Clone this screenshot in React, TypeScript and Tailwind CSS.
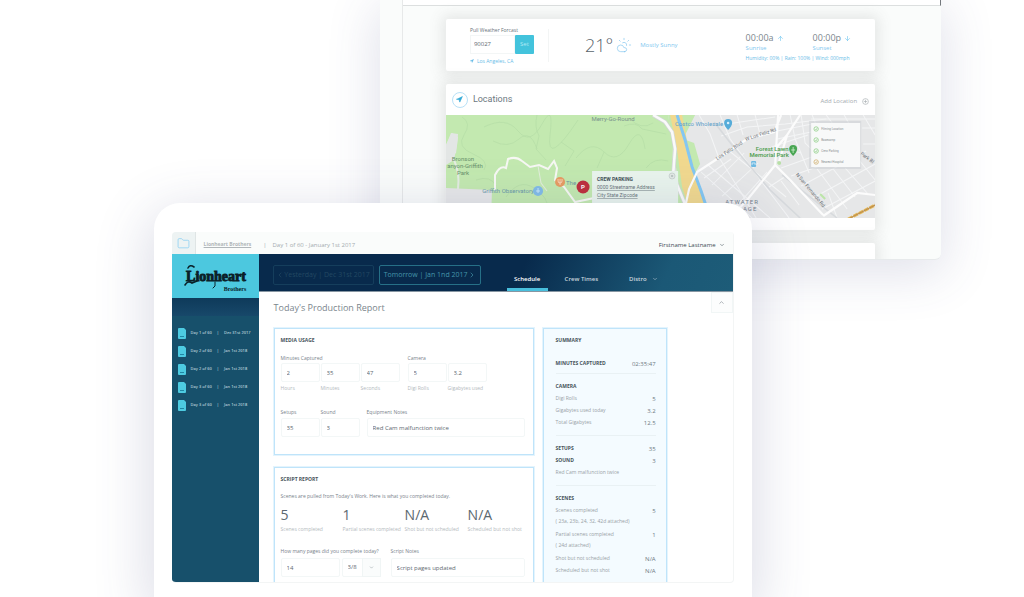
import type { ReactNode } from "react";
import { ArrowDown, ArrowUp, ChevronDown, ChevronLeft, ChevronRight, ChevronUp, CloudSun, Folder, Navigation } from "lucide-react";

const days = [
  { day: "Day 1 of 60", date: "Dec 31st 2017" },
  { day: "Day 2 of 60", date: "Jan 1st 2018" },
  { day: "Day 2 of 60", date: "Jan 1st 2018" },
  { day: "Day 3 of 60", date: "Jan 1st 2018" },
  { day: "Day 3 of 60", date: "Jan 1st 2018" },
];

const scriptStats = [
  { value: "5", label: "Scenes completed" },
  { value: "1", label: "Partial scenes completed" },
  { value: "N/A", label: "Shot but not scheduled" },
  { value: "N/A", label: "Scheduled but not shot" },
];

const legend = [
  { label: "Filming Location", color: "#8fcf86" },
  { label: "Basecamp", color: "#8fcf86" },
  { label: "Crew Parking", color: "#8fcf86" },
  { label: "Nearest Hospital", color: "#d0b070" },
];

const inputClass =
  "block h-[19px] w-full min-w-0 rounded-[2px] border border-[#f3f7f7] bg-white px-[5px] text-[6px] text-[#5d6870] outline-none";

function CityMap() {
  return (
    <svg
      viewBox="0 0 429 103"
      preserveAspectRatio="xMidYMid slice"
      className="block h-[103px] w-full"
      fontFamily="Roboto, sans-serif"
    >
      <rect width="429" height="103" fill="#e6e7e8" />

      {/* park */}
      <path d="M0 0H222L227 28 226 55 232 70 230 103H45L46 75 0 73V44L10 38 12 22 6 18 0 30Z" fill="#c3e9b0" />
      <path d="M0 30 5 18 12 19 11 30 8 45 0 50Z" fill="#e3e6e5" />
      <path d="M8 45Q14 58 12 74" fill="none" stroke="#e4ece2" strokeWidth="2" />
      <g fill="none" stroke="#b5dca6" strokeWidth=".7">
        <path d="M16 2Q26 8 18 20T27 39 38 55" />
        <path d="M38 12Q60 1 72 16T96 9 104 20 132 5" />
        <path d="M91 0Q88 12 93 21L90 34 100 45" />
        <path d="M130 43Q145 24 158 37T183 29 199 34" />
        <path d="M115 27 128 36 119 51M158 37 151 53" />
        <path d="M47 26Q62 34 73 24T91 34M178 11Q190 6 196 14L220 19" />
        <path d="M60 82Q73 63 88 73T101 93M30 65Q45 60 50 71" />
        <path d="M183 3Q195 16 207 8M200 53Q208 42 222 46" />
      </g>
      <path
        d="M49 76 49 60Q54 50 60 53L62 44Q70 41 76 46L84 52 93 50 102 54 108 46 111 53 109 65 118 72 129 87 148 83"
        fill="none" stroke="#f7f8f4" strokeWidth="2"
      />
      <path d="M92 51 95 68 101 76" fill="none" stroke="#e3eedc" strokeWidth="1" />

      {/* city blocks */}
      <g fill="none" stroke="#f4f5f6" strokeWidth="1">
        <path d="M253 0 264 19 272 41 294 76 310 103M274 0 284 24 315 66 343 103" />
        <path d="M255 57 306 103M262 50 324 103M282 35 340 82M266 70 298 38M276 81 312 48M287 95 321 57M258 63 285 44" />
        <path d="M275 21 301 12 339 9 380 4M291 0 297 20M309 0 314 20M281 9 329 2M328 31 362 20M315 37 328 31 355 38" />
        <path d="M344 0 349 24 363 58M355 0 359 28 383 51M366 0 370 10M380 0 386 8M398 0 403 9M331 16 366 9M331 24 365 17" />
        <path d="M335 53 374 39M345 61 382 48M355 71 420 36M365 84 429 49M376 94 429 66M371 54 401 94M387 54 409 82M399 53 421 78M412 44 429 65" />
        <path d="M417 0 429 20M365 4H429M416 13H429M417 29H429M382 78 391 103M335 66 353 90M323 72 340 61" />
      </g>
      <g fill="none" stroke="#d7dadd" strokeWidth="1.6">
        <path d="M268 7 289 34 324 75 354 103M336 60 391 103" />
      </g>

      {/* river corridor */}
      <path d="M222 0H249L237 24 248 28 254 49 245 65 239 103H229L233 73Z" fill="#c3e9b0" />
      <path d="M224 0H236L241 26 248 54 259 87V103H246L236 72 231 35Z" fill="#f1d98f" />
      <path d="M231 0 239 25 246 52 255 76 264 103" fill="none" stroke="#83c7f2" strokeWidth="3" />
      <path d="M207 0 219 7 226 17 229 34 227 60 236 82 241 94" fill="none" stroke="#d3d7d8" strokeWidth="4" />
      <path d="M207 0 219 7 226 17 229 34 227 60 236 82 241 94" fill="none" stroke="#fafafa" strokeWidth="2.6" />
      <path
        d="M239 92 243 74 251 57 271 44 301 24 328 17 335 0M332 0 329 50 301 85 284 103M329 50 344 65 377 100M329 34 341 20M354 0 341 20 332 50M377 101 411 78 429 80"
        fill="none" stroke="#fcfcfc" strokeWidth="2.2"
      />
      <path d="M402 104 429 90" stroke="#e4b754" strokeWidth="3" strokeDasharray="5 1" />
      <path d="M402 104 429 90" stroke="#bb8d51" strokeWidth="1" />
      <path d="M374 79 379 84" stroke="#bce5a9" strokeWidth="2" />

      {/* place names */}
      <g fill="#79928c" fontSize="5" textAnchor="middle">
        <text x="167" y="6" fontSize="6">Merry-Go-Round</text>
        <g fill="#68906b" fontSize="6">
          <text x="17" y="46">Bronson</text>
          <text x="19" y="53">anyon-Griffith</text>
          <text x="17" y="60">Park</text>
        </g>
        <text x="62" y="78" fill="#6b99aa" fontSize="6">Griffith Observatory</text>
        <text x="125" y="70" fill="#70969c" fontSize="6">The</text>
        <text x="253" y="11" fill="#5b9fc8" fontSize="6">Costco Wholesale</text>
        <g fill="#499b4b" fontSize="6" fontWeight="500">
          <text x="326" y="36">Forest Lawn</text>
          <text x="323" y="42">Memorial Park</text>
        </g>
        <g fill="#6d7277" fontSize="5">
          <text transform="translate(284 37) rotate(-33)">Los Feliz Blvd</text>
          <text transform="translate(315 21) rotate(-18)">W Los Feliz Rd</text>
          <text transform="translate(363 76) rotate(50)">N San Fernando Rd</text>
          <text transform="translate(420 44) rotate(37)">Park Bl</text>
        </g>
        <g fill="#74818d" fontSize="6" letterSpacing="1">
          <text x="296" y="89">ATWATER</text>
          <text x="296" y="96">VILLAGE</text>
        </g>
      </g>

      {/* pins */}
      <path d="M282 15Q278 11 278 8A4 4 0 0 1 286 8Q286 11 282 15Z" fill="#56acd9" />
      <circle cx="282" cy="8" r="1.3" fill="#d9f0fc" />
      <path d="M347 41Q343 37 343 34A4 4 0 0 1 351 34Q351 37 347 41Z" fill="#49a653" />
      <path d="M347 32V38M345 35H349" stroke="#d7f1d5" strokeWidth=".8" />
      <rect x="305" y="46" width="5" height="6" rx="1" fill="#6db9e2" />
      <path d="M306 50V48H309V50" stroke="#fff" strokeWidth=".6" fill="none" />
      <circle cx="333" cy="48" r="2" fill="#b8dfa7" />
      <circle cx="92" cy="76" r="5" fill="#82bce7" />
      <path d="M92 73V78M90 76H94" stroke="#d7effe" strokeWidth=".8" />
      <circle cx="114" cy="67" r="5" fill="#e79c63" />
      <path d="M112 64V66Q112 68 114 68T116 66V64M114 64V70" fill="none" stroke="#ffe8d3" strokeWidth=".7" />

      {/* parking callout */}
      <rect x="146" y="56" width="86" height="52" fill="#e9f4ed" />
      <text x="151" y="66" fill="#43535a" fontSize="5" fontWeight="700">CREW PARKING</text>
      <text x="151" y="74" fill="#69777b" fontSize="5" textDecoration="underline">0000 Streetname Address</text>
      <text x="151" y="82" fill="#69777b" fontSize="5" textDecoration="underline">City State Zipcode</text>
      <circle cx="226" cy="61" r="3" fill="#e1e8e5" stroke="#bac5c3" strokeWidth=".6" />
      <path d="M225 60 227 62M227 60 225 62" stroke="#9eabaa" strokeWidth=".6" />
      <circle cx="137" cy="72" r="6.5" fill="#be303d" />
      <text x="137" y="74" fill="#fff" fontSize="6" fontWeight="700" textAnchor="middle">P</text>

      {/* legend */}
      <rect x="363" y="6" width="52" height="48" fill="#c9ced2" opacity=".5" />
      <rect x="365" y="8" width="49" height="44" fill="#f8f9f9" />
      {legend.map((item, i) => (
        <g key={item.label} transform={`translate(370 ${14 + i * 11})`}>
          <circle r="2.2" fill="none" stroke={item.color} strokeWidth=".8" />
          <path d="M-1 0 0 1 1 -1" fill="none" stroke={item.color} strokeWidth=".6" />
          <text x="5" y="1" fill="#8b9193" fontSize="3">{item.label}</text>
        </g>
      ))}
    </svg>
  );
}

function WeatherCard() {
  return (
    <section className="flex h-[52px] items-center rounded-[2px] bg-white px-6 shadow-[0_0_14px_4px_rgba(90,95,95,0.13)]">
      <div className="w-[64px]">
        <label htmlFor="zip" className="block text-[5px] leading-[8px] text-[#68727a]">Pull Weather Forcast</label>
        <div className="mt-px flex h-[19px]">
          <input id="zip" defaultValue="90027" className="w-[45px] border border-[#f3f6f6] px-[3px] text-[6px] text-[#5d6870]" />
          <button className="w-[19px] rounded-[1px] bg-[#43c3dc] text-[6px] text-[#b2eaf5]">Set</button>
        </div>
        <a href="#la" className="mt-[3px] flex items-center gap-[3px] text-[5px] leading-[8px] text-[#68bce7]">
          <Navigation size={4} fill="currentColor" />
          Los Angeles, CA
        </a>
      </div>
      <div className="ml-[14px] h-[33px] w-px bg-[#f3f5f5]" />
      <div className="ml-9 flex items-center">
        <span className="text-[18px] font-light leading-none text-[#59646c]">21°</span>
        <CloudSun size={16} strokeWidth={1} className="ml-[3px] text-[#7fc4ef]" />
        <span className="ml-2 text-[6px] text-[#7fc8ef]">Mostly Sunny</span>
      </div>
      <div className="ml-auto pt-1">
        <div className="grid grid-cols-[67px_1fr] text-[9px] leading-[12px] text-[#7b868d]">
          <span className="flex items-center gap-[3px]">00:00a <ArrowUp size={7} className="text-[#68c3ee]" /></span>
          <span className="flex items-center gap-[3px]">00:00p <ArrowDown size={7} className="text-[#68c3ee]" /></span>
          <span className="text-[6px] leading-[8px] text-[#7fc8ef]">Sunrise</span>
          <span className="text-[6px] leading-[8px] text-[#7fc8ef]">Sunset</span>
        </div>
        <p className="mt-[2px] text-[5px] leading-[8px] text-[#68bce7]">Humidity: 00% | Rain: 100% | Wind: 000mph</p>
      </div>
    </section>
  );
}

function LocationsTablet() {
  return (
    <div className="ml-[37.1%] mr-[8.1%] h-[260px] self-start overflow-hidden rounded-b-[6px] border-b border-[#e7eaeb] bg-[#fafcfb] pl-[22px] shadow-[0_10px_50px_4px_rgba(70,75,130,0.16)] [grid-area:1/1]">
      <div className="h-full border-l border-[#e7e9e9]">
        <div className="h-[6px] border-b border-r border-b-[#dcdfdf] border-r-[#74787d] bg-white" />
        <div className="ml-[43px] mr-[66px] flex flex-col gap-[13px] pt-[13px]">
          <WeatherCard />
          <section className="rounded-[2px] bg-white pb-3 shadow-[0_0_14px_4px_rgba(90,95,95,0.13)]">
            <header className="flex h-[31px] items-center pl-[6px] pr-[6px]">
              <span className="flex size-4 items-center justify-center rounded-full border border-[#b9e1f7]">
                <Navigation size={7} fill="currentColor" className="text-[#34a9d5]" />
              </span>
              <h2 className="ml-[5px] font-[Roboto,sans-serif] text-[9px] text-[#6d7880]">Locations</h2>
              <button className="ml-auto mt-1 flex items-center gap-[5px] text-[6px] text-[#a4abaf]">
                Add Location
                <svg viewBox="0 0 8 8" className="size-[7px]" fill="none" stroke="#a4abaf" strokeWidth=".7">
                  <circle cx="4" cy="4" r="3.3" />
                  <path d="M4 2V6M2 4H6" />
                </svg>
              </button>
            </header>
            <CityMap />
          </section>
          <section className="h-6 rounded-[2px] bg-white shadow-[0_0_14px_4px_rgba(90,95,95,0.13)]" />
        </div>
      </div>
    </div>
  );
}

function Logo() {
  return (
    <svg viewBox="0 0 87 44" className="block h-11 w-full bg-[#4cc8df]" fill="#0a2028" fontFamily="'Liberation Serif', serif" fontWeight="700">
      <text x="44" y="27" fontSize="14" textAnchor="middle" stroke="#0a2028" strokeWidth=".9">Lionheart</text>
      <text x="63" y="37" fontSize="6" textAnchor="middle">Brothers</text>
      {/* pen flourishes round the lettering */}
      <g fill="none" stroke="#0a2028" strokeLinecap="round">
        <path d="M16 14Q18 10 22 13M13 31Q16 26 20 29L25 27" strokeWidth="1.6" />
        <path d="M43 28V32L41 34" strokeWidth="1" />
      </g>
    </svg>
  );
}

function Sidebar() {
  return (
    <aside className="w-[87px] shrink-0 bg-[#17506b]">
      <Logo />
      <div className="h-[18px] bg-gradient-to-b from-[#0e3a5a] to-[#17486a]" />
      <nav className="mt-2">
        {days.map((item, i) => (
          <a key={i} href="#day" className="flex h-[18px] items-center pl-[6px] text-[4px] font-semibold text-[#b4ced8]">
            <svg viewBox="0 0 8 11" className="mr-[5px] h-[11px] w-2">
              <path d="M1 0H6L8 2V10Q8 11 7 11H1Q0 11 0 10V1Q0 0 1 0Z" fill="#4dcbe1" />
              <path d="M2 8.5H6" stroke="#2187a3" />
            </svg>
            <span>{item.day}</span>
            <span className="mx-[5px]">|</span>
            <span>{item.date}</span>
          </a>
        ))}
      </nav>
    </aside>
  );
}

function NavBar() {
  return (
    <header className="flex h-[38px] shrink-0 items-stretch border-b border-[#8796a2] bg-[linear-gradient(115deg,#082a4c_0%,#082a4c_55%,#1b5876_85%,#1d5c78_100%)] pl-[14px] text-[6px]">
      <div className="mt-[11px] flex h-5 gap-[5px] text-[7px]">
        <button className="flex w-[101px] items-center justify-center whitespace-nowrap rounded-[2px] border border-[#153e5c] text-[#224862]">
          <ChevronLeft size={8} />
          Yesterday | Dec 31st 2017
        </button>
        <button className="flex w-[102px] items-center justify-center whitespace-nowrap rounded-[2px] border border-[#267087] text-[#4595aa]">
          Tomorrow | Jan 1nd 2017
          <ChevronRight size={8} />
        </button>
      </div>
      <nav className="ml-[26px] flex font-semibold text-[#c9d5dd]">
        <a href="#schedule" className="flex w-[41px] items-center justify-center border-b-[3px] border-[#48bfdd] pt-4 text-white">Schedule</a>
        <a href="#crew" className="ml-[17px] flex items-center whitespace-nowrap pt-[13px]">Crew Times</a>
        <a href="#distro" className="ml-[31px] flex items-center gap-[5px] pt-[13px]">
          Distro <ChevronDown size={6} />
        </a>
      </nav>
    </header>
  );
}

function ValueField({ id, label, value }: { id: string; label: string; value: string }) {
  return (
    <div className="w-[39px]">
      <input id={id} defaultValue={value} className={inputClass} />
      <label htmlFor={id} className="mt-[2px] block whitespace-nowrap text-[5px] leading-[8px] text-[#b3b9bd]">{label}</label>
    </div>
  );
}

function TopLabelField({ id, label, value, className }: { id: string; label: string; value: string; className: string }) {
  return (
    <div className={className}>
      <label htmlFor={id} className="mb-[2px] block whitespace-nowrap text-[5px] leading-[8px] text-[#78828a]">{label}</label>
      <input id={id} defaultValue={value} className={inputClass} />
    </div>
  );
}

function Card({ title, children }: { title: string; children: ReactNode }) {
  return (
    <section className="border border-[#bfe4fa] bg-white pb-[17px] pl-[6px] pr-2 pt-[7px] shadow-[0_0_0_1px_#e4f4fd]">
      <h3 className="text-[5px] font-bold leading-[8px] text-[#47535b]">{title}</h3>
      {children}
    </section>
  );
}

function MediaUsage() {
  return (
    <Card title="MEDIA USAGE">
      <div className="mt-[10px] flex gap-2">
        <div>
          <p className="mb-px text-[5px] leading-[8px] text-[#78828a]">Minutes Captured</p>
          <div className="flex gap-px">
            <ValueField id="hours" label="Hours" value="2" />
            <ValueField id="minutes" label="Minutes" value="35" />
            <ValueField id="seconds" label="Seconds" value="47" />
          </div>
        </div>
        <div>
          <p className="mb-px text-[5px] leading-[8px] text-[#78828a]">Camera</p>
          <div className="flex gap-px">
            <ValueField id="rolls" label="Digi Rolls" value="5" />
            <ValueField id="gigabytes" label="Gigabytes used" value="3.2" />
          </div>
        </div>
      </div>
      <div className="mt-4 flex gap-px">
        <TopLabelField id="setups" label="Setups" value="35" className="w-[39px]" />
        <TopLabelField id="sound" label="Sound" value="3" className="w-[39px]" />
        <TopLabelField id="equipment" label="Equipment Notes" value="Red Cam malfunction twice" className="ml-[6px] flex-1" />
      </div>
    </Card>
  );
}

function ScriptReport() {
  return (
    <Card title="SCRIPT REPORT">
      <p className="mt-[9px] text-[5px] leading-[8px] text-[#78828a]">Scenes are pulled from Today's Work. Here is what you completed today.</p>
      <div className="mt-[7px] grid grid-cols-[62px_62px_63px_1fr]">
        {scriptStats.map((stat) => (
          <div key={stat.label} className="whitespace-nowrap">
            <p className="text-[14px] leading-[16px] text-[#5b6870]">{stat.value}</p>
            <p className="mt-[2px] text-[5px] leading-[8px] text-[#b3b9bd]">{stat.label}</p>
          </div>
        ))}
      </div>
      <div className="mt-[14px] flex gap-[10px]">
        <div className="w-[100px]">
          <label htmlFor="pages" className="mb-[3px] block whitespace-nowrap text-[5px] leading-[8px] text-[#78828a]">How many pages did you complete today?</label>
          <div className="flex gap-[2px]">
            <input id="pages" defaultValue="14" className={inputClass} />
            <div className="relative w-[39px] shrink-0">
              <select aria-label="Page fraction" className="block h-[19px] w-full appearance-none rounded-[2px] border border-[#f3f7f7] px-[5px] text-[6px] text-[#5d6870]">
                <option>3/8</option>
              </select>
              <span className="pointer-events-none absolute inset-y-0 right-0 flex w-[19px] items-center justify-center border border-[#f0f5f5] bg-[#fafcfc]">
                <ChevronDown size={5} className="text-[#78828a]" />
              </span>
            </div>
          </div>
        </div>
        <div className="flex-1">
          <label htmlFor="script" className="mb-[3px] block text-[5px] leading-[8px] text-[#78828a]">Script Notes</label>
          <input id="script" defaultValue="Script pages updated" className={inputClass} />
        </div>
      </div>
    </Card>
  );
}

function Row({ label, value, strong }: { label: string; value?: string; strong?: boolean }) {
  return (
    <div className="flex h-3 items-center justify-between whitespace-nowrap">
      {strong ? <span className="font-bold text-[#47535b]">{label}</span> : <span>{label}</span>}
      <span className="text-[6px] text-[#6f7a82]">{value}</span>
    </div>
  );
}

function Summary() {
  return (
    <section className="border border-[#bfe4fa] bg-[#f4fbff] pl-3 pr-[10px] pt-[7px] text-[5px] text-[#98a1a6] shadow-[0_0_0_1px_#e4f4fd]">
      <h3 className="font-bold leading-[8px] text-[#47535b]">SUMMARY</h3>
      <div className="mt-[14px] border-b border-[#e9f1f4] pb-[3px]">
        <Row label="MINUTES CAPTURED" value="02:35:47" strong />
      </div>
      <div className="border-b border-[#e9f1f4] pb-[6px] pt-[7px]">
        <Row label="CAMERA" strong />
        <Row label="Digi Rolls" value="5" />
        <Row label="Gigabytes used today" value="3.2" />
        <Row label="Total Gigabytes" value="12.5" />
      </div>
      <div className="border-b border-[#e9f1f4] pb-[6px] pt-[7px]">
        <Row label="SETUPS" value="35" strong />
        <Row label="SOUND" value="3" strong />
        <Row label="Red Cam malfunction twice" />
      </div>
      <div className="pt-[7px]">
        <Row label="SCENES" strong />
        <Row label="Scenes completed" value="5" />
        <p className="leading-[8px]">( 23a, 23b, 24, 32, 42d attached)</p>
        <div className="mt-1">
          <Row label="Partial scenes completed" value="1" />
          <p className="leading-[8px]">( 24d attached)</p>
        </div>
        <div className="mt-1">
          <Row label="Shot but not scheduled" value="N/A" />
          <Row label="Scheduled but not shot" value="N/A" />
        </div>
      </div>
    </section>
  );
}

function ReportTablet() {
  return (
    <div className="ml-[15%] mr-[26.6%] mt-[203px] flex min-h-0 flex-col rounded-t-[26px] bg-white px-[18px] pb-[14px] pt-[29px] shadow-[0_14px_54px_6px_rgba(70,75,130,0.19)] [grid-area:1/1]">
      <div className="flex min-h-0 flex-1 flex-col overflow-hidden rounded-[4px] border-b border-r border-[#f3f5f5]">
        <div className="flex h-[22px] shrink-0 items-center bg-[#fafcfb] pr-2 text-[6px]">
          <button aria-label="Projects" className="flex h-full w-6 items-center justify-center border-r border-[#dfe5e5] bg-[#edf3f3]">
            <Folder size={13} strokeWidth={1.5} className="text-[#8fd2f3]" />
          </button>
          <div className="flex items-center pt-1">
            <a href="#project" className="ml-2 text-[5px] font-bold text-[#b0b6b9] underline">Lionheart Brothers</a>
            <span className="ml-3 text-[#a4abaf]">|</span>
            <span className="ml-[6px] text-[#a4abaf]">Day 1 of 60 - January 1st 2017</span>
          </div>
          <button className="ml-auto flex items-center gap-[3px] pt-1 font-medium text-[#3d4b55]">
            Firstname Lastname <ChevronDown size={6} />
          </button>
        </div>
        <div className="flex min-h-0 flex-1">
          <Sidebar />
          <div className="flex min-w-0 flex-1 flex-col">
            <NavBar />
            <div className="flex h-9 shrink-0 justify-between">
              <h1 className="ml-[15px] mt-[10px] text-[9px] leading-[12px] text-[#7b868d]">Today's Production Report</h1>
              <button aria-label="Collapse" className="flex h-[21px] w-[22px] items-center justify-center border border-[#f1f6f6] bg-[#fcfdfd]">
                <ChevronUp size={7} className="text-[#78828a]" />
              </button>
            </div>
            <div className="ml-[15px] mr-[66px] grid min-h-0 flex-1 grid-cols-[260fr_124fr] gap-[9px]">
              <div className="flex flex-col gap-[12px]">
                <MediaUsage />
                <ScriptReport />
              </div>
              <Summary />
            </div>
          </div>
        </div>
      </div>
    </div>
  );
}

export default function App() {
  return (
    <main className="grid h-screen grid-cols-1 grid-rows-[minmax(0,1fr)] overflow-hidden bg-white font-['Open_Sans',sans-serif]">
      <LocationsTablet />
      <ReportTablet />
    </main>
  );
}
